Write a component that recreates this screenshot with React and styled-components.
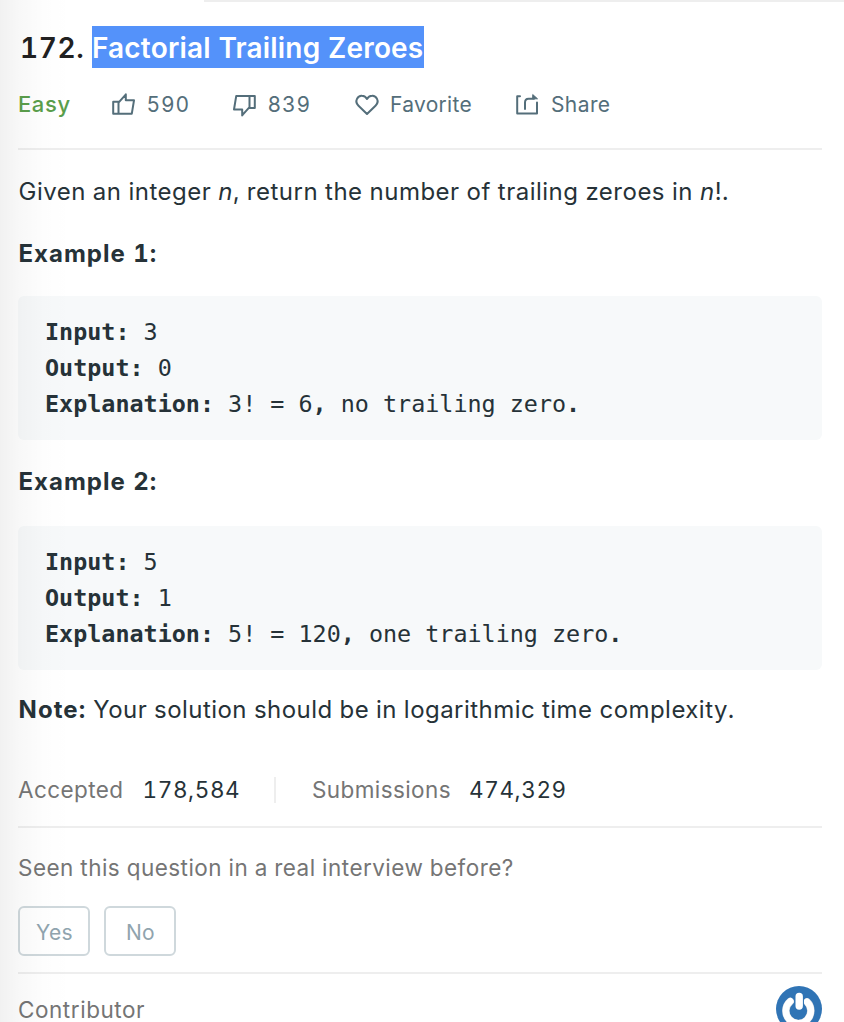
import React from "react";
import styled, { createGlobalStyle } from "styled-components";

const Global = createGlobalStyle`
  * { box-sizing: border-box; }
  html, body { margin: 0; padding: 0; background: #fff; overflow: hidden; }
  body {
    font-family: Inter, "Liberation Sans", sans-serif;
    font-variant-numeric: tabular-nums;
    color: #263238;
  }
`;

const Page = styled.main`
  position: relative;
  width: 844px;
  height: 1022px;
  overflow: hidden;
  padding: 0 22px 0 18px;
  white-space: nowrap;
`;

const EdgeShade = styled.div`
  position: absolute;
  inset: 0 auto 0 0;
  width: 72px;
  pointer-events: none;
  background: linear-gradient(to right, rgba(0, 0, 0, 0.055), rgba(0, 0, 0, 0.026) 28%, rgba(0, 0, 0, 0.008) 62%, transparent);
`;

const TabEdge = styled.div`
  height: 2px;
  margin: 0 -22px 24px 186px;
  background: #eee;
`;

const Title = styled.h1`
  display: flex;
  height: 42px;
  margin: 0;
  padding-left: 2px;
  font-size: 28px;
  font-weight: 600;
  line-height: 45px;
  color: #212121;
`;

const Number = styled.span`
  width: 72px;
  letter-spacing: 0.6px;
`;

const Selected = styled.span`
  width: 332px;
  background: #5492fa;
  color: #fff;
  letter-spacing: 0.18px;
`;

const Meta = styled.div`
  display: flex;
  align-items: center;
  height: 80px;
  padding-bottom: 6px;
  font-size: 21px;
  color: #546e7a;
`;

const Difficulty = styled.span`
  width: 93px;
  padding-bottom: 2px;
  font-size: 22px;
  font-weight: 500;
  letter-spacing: 0.6px;
  color: #5a9e4b;
`;

const Action = styled.span`
  display: flex;
  align-items: center;
  gap: ${(p) => p.$gap}px;
  width: ${(p) => p.$width}px;
  line-height: 24px;
  letter-spacing: ${(p) => p.$spacing}px;
`;

const Icon = styled.svg`
  flex: none;
  overflow: visible;
  fill: none;
  stroke: currentColor;
  stroke-width: 2;
  stroke-linejoin: round;
  stroke-linecap: round;
`;

const Divider = styled.hr`
  height: 2px;
  margin: 0;
  border: 0;
  background: #eee;
`;

const Paragraph = styled.p`
  margin: ${(p) => p.$top}px 0 0;
  padding-left: 0.5px;
  height: 36px;
  font-size: 24px;
  line-height: 36px;
  letter-spacing: ${(p) => p.$spacing}px;
`;

const Strong = styled.strong`
  font-weight: 700;
  letter-spacing: ${(p) => p.$spacing}px;
`;

const Code = styled.pre`
  height: 144px;
  margin: ${(p) => p.$top}px 0 0;
  padding: 18px 27px;
  border-radius: 6px;
  background: #f7f9fa;
  font: 23.4px/36px "DejaVu Sans Mono", monospace;
`;

const Stats = styled.div`
  display: flex;
  align-items: center;
  height: 72px;
  margin-top: 26px;
  font-size: 22.5px;
  line-height: 26px;
`;

const StatLabel = styled.span`
  width: ${(p) => p.$width}px;
  letter-spacing: ${(p) => p.$spacing}px;
  color: #757575;
`;

const StatValue = styled.span`
  letter-spacing: 0.6px;
  width: ${(p) => p.$width}px;
`;

const Separator = styled.i`
  width: 2px;
  height: 26px;
  margin-right: 36px;
  background: #eee;
`;

const Question = styled.div`
  height: 78px;
  font-size: 22.5px;
  line-height: 80px;
  letter-spacing: 0.46px;
  color: #757575;
`;

const Answers = styled.div`
  display: flex;
  gap: 14px;
  height: 66px;
`;

const Answer = styled.button`
  width: 72px;
  height: 50px;
  padding: 2px 0 0 1px;
  border: 2px solid #cfd8dc;
  border-radius: 6px;
  background: transparent;
  font: 400 21px Inter, sans-serif;
  letter-spacing: 0.3px;
  color: #90a4ae;
`;

const Contributor = styled.div`
  display: flex;
  justify-content: space-between;
  padding-top: 12px;
  font-size: 22.5px;
  line-height: 48px;
  letter-spacing: 0.55px;
  color: #757575;
`;

const Avatar = styled.svg`
  flex: none;
`;

function Thumb({ down }) {
  return (
    <Icon width="24" height="24" viewBox="0 0 24 24">
      <g transform={down ? "rotate(180 12.5 11.9)" : undefined}>
        <path d="M2.2 8.7H7.5V20.7H2.2ZM7.5 9.7L14 2.4L14.8 1.4V7.3H23L20.8 20.7H7.5" />
      </g>
    </Icon>
  );
}

function Heart() {
  return (
    <Icon width="24" height="24" viewBox="0 0 24 24">
      <path d="M12 21L3.5 12.7C-1.2 8 3 2.5 7 2.8C9.3 2.9 11 4.2 12 6C13 4.2 14.7 2.9 17 2.8C21 2.5 25.2 8 20.5 12.7Z" />
    </Icon>
  );
}

function ShareIcon() {
  return (
    <Icon width="24" height="24" viewBox="0 0 24 24">
      <path d="M5 3.2H2.2V20.5H22V9.5" />
      <path d="M10 16V9.5Q10 5.8 13.5 5.8H19" />
      <path d="M18 1.8L22.5 5.8H18Z" fill="currentColor" strokeWidth="1" />
    </Icon>
  );
}

export default function App() {
  return (
    <Page>
      <Global />
      <TabEdge />
      <Title>
        <Number>172.</Number>
        <Selected>Factorial Trailing Zeroes</Selected>
      </Title>
      <Meta>
        <Difficulty>Easy</Difficulty>
        <Action $width={121} $gap={11.5} $spacing={0.9}><Thumb />590</Action>
        <Action $width={123} $gap={11.5} $spacing={0.9}><Thumb down />839</Action>
        <Action $width={160} $gap={11} $spacing={0.3}><Heart />Favorite</Action>
        <Action $width={100} $gap={12} $spacing={0.4}><ShareIcon />Share</Action>
      </Meta>
      <Divider />
      <Paragraph $top={24} $spacing={0.5}>
        Given an integer <em>n</em>, return the number of trailing zeroes in <em>n</em>!.
      </Paragraph>
      <Paragraph $top={26}><Strong $spacing={1}>Example 1:</Strong></Paragraph>
      <Code $top={24}>
        <b>Input:</b>{" 3\n"}
        <b>Output:</b>{" 0\n"}
        <b>Explanation:</b>{" 3! = 6"}<b>,</b>{" no trailing zero"}<b>.</b>
      </Code>
      <Paragraph $top={24}><Strong $spacing={1}>Example 2:</Strong></Paragraph>
      <Code $top={26}>
        <b>Input:</b>{" 5\n"}
        <b>Output:</b>{" 1\n"}
        <b>Explanation:</b>{" 5! = 120"}<b>,</b>{" one trailing zero"}<b>.</b>
      </Code>
      <Paragraph $top={22} $spacing={0.46}>
        <Strong $spacing={1.1}>Note:</Strong> Your solution should be in logarithmic time complexity.
      </Paragraph>
      <Stats>
        <StatLabel $width={124.5} $spacing={0.4}>Accepted</StatLabel>
        <StatValue $width={131.5}>178,584</StatValue>
        <Separator />
        <StatLabel $width={157} $spacing={0.4}>Submissions</StatLabel>
        <StatValue $width={110}>474,329</StatValue>
      </Stats>
      <Divider />
      <Question>Seen this question in a real interview before?</Question>
      <Answers>
        <Answer>Yes</Answer>
        <Answer>No</Answer>
      </Answers>
      <Divider />
      <Contributor>
        Contributor
        <Avatar width="46" height="46" viewBox="0 0 46 46">
          <circle cx="23" cy="23" r="23" fill="#3074b5" />
          <path d="M14.3 15.3A12.5 12.5 0 1 0 31 15.8" fill="none" stroke="#c9cfd6" strokeWidth="7.4" strokeLinecap="round" />
          <path d="M14.3 15.3A12.5 12.5 0 1 0 31 15.8" fill="none" stroke="#fff" strokeWidth="6.6" strokeLinecap="round" />
          <path d="M23.2 10.5V20" fill="none" stroke="#3074b5" strokeWidth="9.5" strokeLinecap="round" />
          <path d="M23.2 10.5V20" fill="none" stroke="#fff" strokeWidth="7.4" strokeLinecap="round" />
        </Avatar>
      </Contributor>
      <EdgeShade />
    </Page>
  );
}
